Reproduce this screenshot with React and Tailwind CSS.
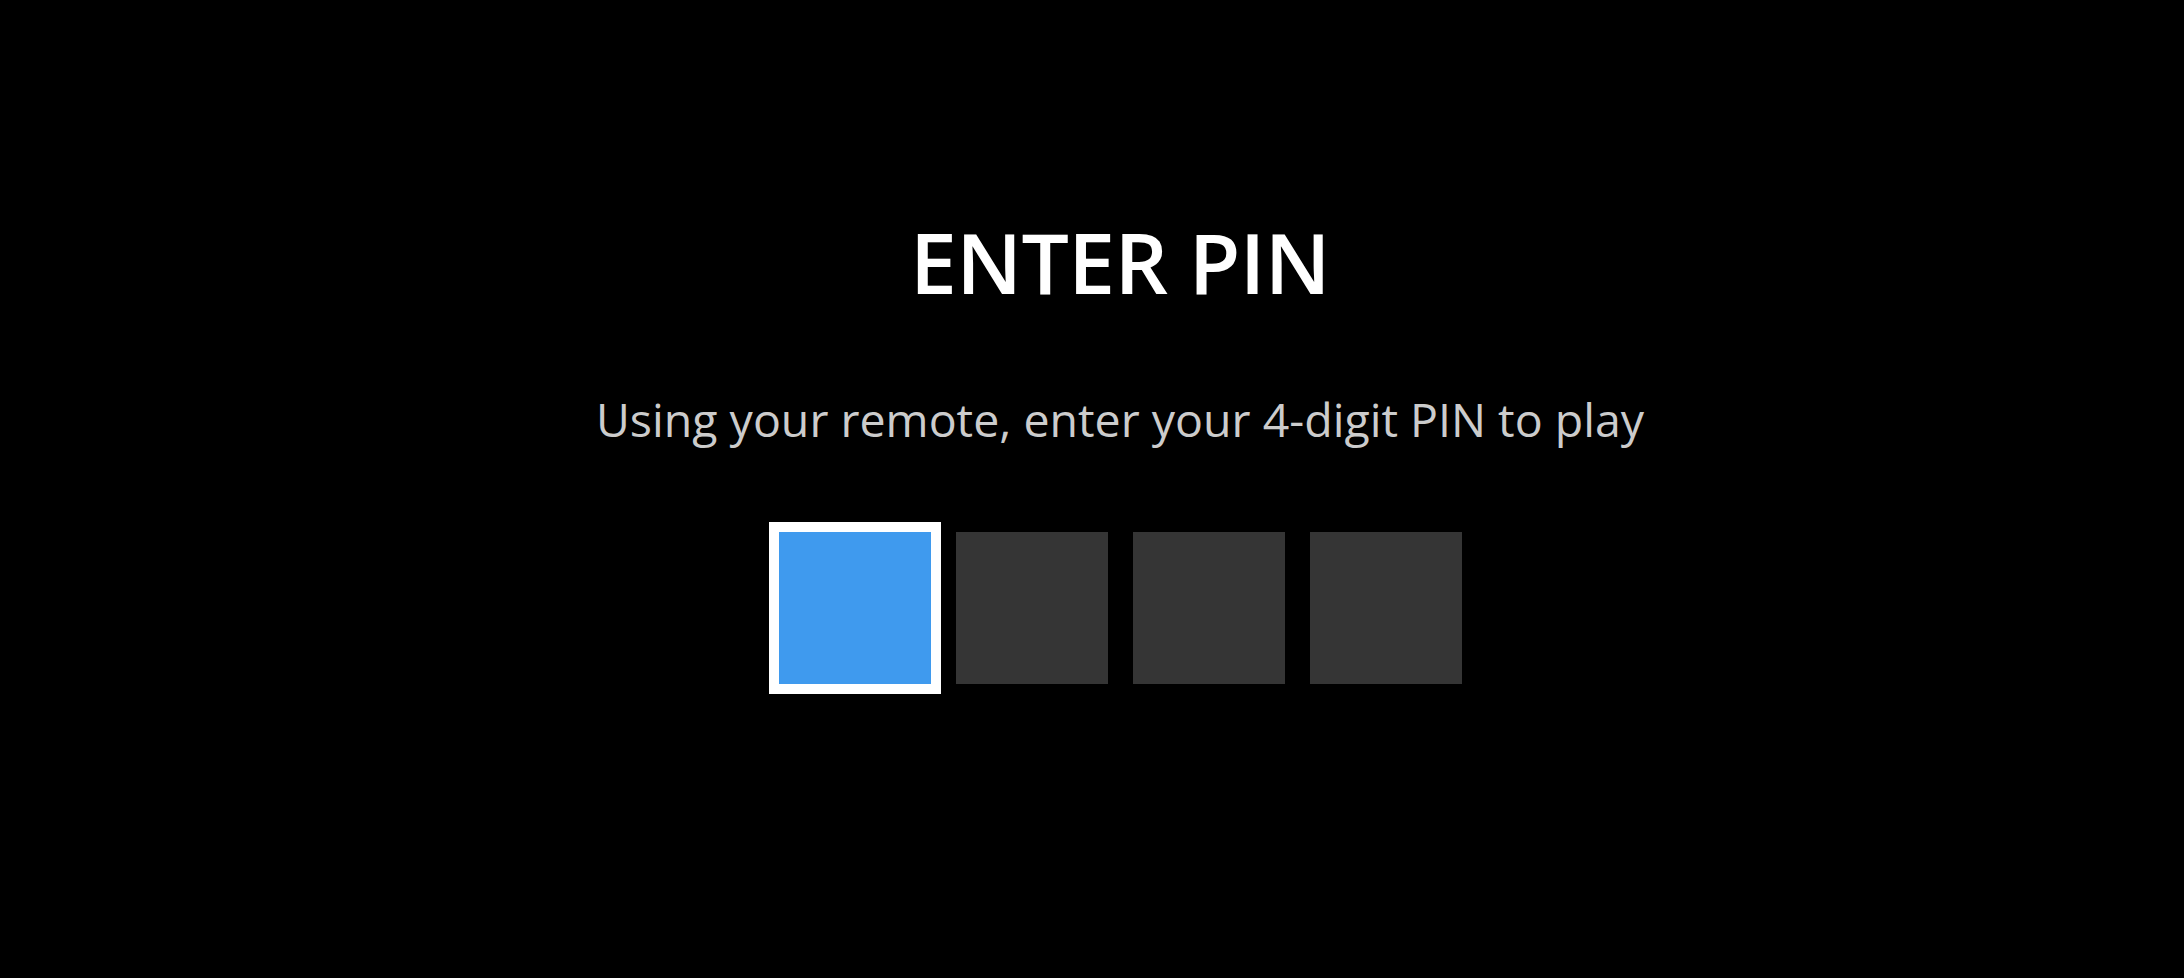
export default function App() {
    const slots = [0, 1, 2, 3]
    const active = 0

    return (
        <div
            className="min-h-[978px] w-full bg-black flex flex-col items-center pl-[56px] pt-[220px]"
            style={{ fontFamily: '"Open Sans", "Noto Sans", sans-serif' }}
        >
            <h1 className="text-[84px] leading-none font-semibold text-white tracking-[-0.6px]">
                ENTER PIN
            </h1>
            <p className="mt-[92px] text-[46.5px] leading-none text-[#cccccc]">
                Using your remote, enter your 4-digit PIN to play
            </p>
            <div className="mt-[89px] flex gap-[25px]">
                {slots.map((i) =>
                    i === active ? (
                        <div
                            key={i}
                            className="w-[152px] h-[152px] bg-[#3f9aee] outline-[10px] outline-solid outline-white"
                        />
                    ) : (
                        <div key={i} className="w-[152px] h-[152px] bg-[#353535]" />
                    )
                )}
            </div>
        </div>
    )
}
